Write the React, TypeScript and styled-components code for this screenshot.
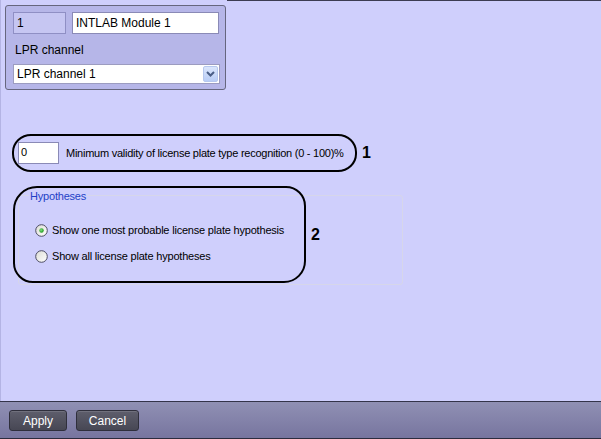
import styled, { createGlobalStyle } from "styled-components";

const GlobalStyle = createGlobalStyle`
  html, body {
    margin: 0;
    padding: 0;
  }
  body {
    font-family: "Liberation Sans", Arial, sans-serif;
    color: #000;
  }
`;

const Window = styled.div`
  width: 601px;
  height: 439px;
  display: flex;
  flex-direction: column;
  overflow: hidden;
`;

const Content = styled.div`
  flex: 1;
  display: flex;
  flex-direction: column;
  align-items: flex-start;
  padding: 5px 0 0 4px;
  border-left: 1px solid #b4b4e4;
  background:
    linear-gradient(to right, transparent 226px, #3c3c52 226px) top / 100% 1px no-repeat,
    #cfcffc;
`;

const ObjectPanel = styled.div`
  width: 221px;
  height: 85px;
  box-sizing: border-box;
  border: 1px solid #66667e;
  border-radius: 3px;
  background: #b6b6e8;
  padding: 6px 0 0 7px;
  display: flex;
  flex-direction: column;
`;

const PanelRow = styled.div`
  display: flex;
  gap: 6px;
`;

const Field = styled.div<{ $width: number; $muted?: boolean }>`
  width: ${(p) => p.$width}px;
  height: 22px;
  box-sizing: border-box;
  border: 1px solid ${(p) => (p.$muted ? "#8f8fc4" : "#8a8ab6")};
  background: ${(p) => (p.$muted ? "#c6c6f2" : "#ffffff")};
  font-size: 12px;
  line-height: 20px;
  padding-left: 3px;
  white-space: nowrap;
`;

const PanelLabel = styled.div`
  font-size: 12px;
  line-height: 14px;
  margin: 9px 0 0 2px;
`;

const Select = styled.div`
  margin-top: 7px;
  width: 207px;
  height: 20px;
  box-sizing: border-box;
  border: 1px solid #9c9cc0;
  background: #fff;
  display: flex;
  align-items: center;
  justify-content: space-between;
  padding: 0 1px 0 3px;
  font-size: 12px;
`;

const DropButton = styled.div`
  width: 15px;
  height: 16px;
  box-sizing: border-box;
  border: 1px solid #b6c8ee;
  border-radius: 2px;
  background: linear-gradient(#dbe6fc, #b9cdf6);
  display: flex;
  align-items: center;
  justify-content: center;
`;

const CalloutRow = styled.div`
  margin: 44px 0 0 7px;
  display: flex;
  align-items: center;
  gap: 5px;
`;

const Ellipse = styled.div`
  width: 345px;
  height: 38px;
  box-sizing: border-box;
  border: 2.5px solid #000;
  border-radius: 19px / 18px;
  display: flex;
  align-items: center;
  gap: 7px;
  padding-left: 4px;
`;

const NumberInput = styled.div`
  width: 41px;
  height: 22px;
  box-sizing: border-box;
  border: 1px solid #8a8ab6;
  background: #fff;
  font-size: 11px;
  line-height: 18px;
  padding-left: 2px;
`;

const SmallText = styled.span`
  font-size: 11px;
  letter-spacing: -0.25px;
  white-space: nowrap;
`;

const Marker = styled.span`
  font-size: 16px;
  font-weight: bold;
  line-height: 16px;
`;

const GroupBox = styled.div`
  position: relative;
  margin: 23px 0 0 13px;
  width: 385px;
  box-sizing: border-box;
  border: 1px solid #d6d6ea;
  border-radius: 3px;
  padding: 0 10px 20px;
  display: flex;
  flex-direction: column;
  align-items: flex-start;
`;

const Caption = styled.span`
  margin-top: -6px;
  padding: 0 1px;
  background: #cfcffc;
  color: #1f3fc6;
  font-size: 11px;
  letter-spacing: -0.2px;
  line-height: 13px;
`;

const Options = styled.div`
  display: flex;
  flex-direction: column;
  gap: 10px;
  padding: 19px 0 0 6px;
`;

const Option = styled.label`
  display: flex;
  align-items: center;
  gap: 4px;
  height: 16px;
  font-size: 11px;
  letter-spacing: -0.2px;
  white-space: nowrap;
`;

const Annotation = styled.div`
  position: absolute;
  left: -6px;
  top: -10px;
  display: flex;
  align-items: center;
  gap: 5px;
  pointer-events: none;
`;

const Loop = styled.div`
  width: 293px;
  height: 97px;
  box-sizing: border-box;
  border: 2.5px solid #000;
  border-radius: 24px 20px 22px 20px;
`;

const ActionBar = styled.div`
  height: 38px;
  box-sizing: border-box;
  border-top: 1px solid #34344a;
  border-bottom: 1px solid #2c2c3e;
  background: linear-gradient(#9090b4, #77759f);
  display: flex;
  align-items: flex-start;
  gap: 9px;
  padding: 8px 0 0 9px;
`;

const Button = styled.button<{ $width: number }>`
  width: ${(p) => p.$width}px;
  height: 21px;
  border: 1px solid #2f2f3c;
  border-radius: 3px;
  background: linear-gradient(#5e5e6c, #474754);
  color: #fff;
  font-family: "Liberation Sans", Arial, sans-serif;
  font-size: 12px;
  padding: 0;
  box-shadow: inset 0 1px 0 rgba(255, 255, 255, 0.12);
`;

const Chevron = () => (
  <svg width="9" height="6" viewBox="0 0 9 6">
    <path d="M1 1 L4.5 4.5 L8 1" fill="none" stroke="#4a5e86" strokeWidth="2" />
  </svg>
);

const Radio = ({ checked }: { checked?: boolean }) => (
  <svg width="13" height="13" viewBox="0 0 13 13">
    <defs>
      <linearGradient id="rb" x1="0" y1="0" x2="1" y2="1">
        <stop offset="0" stopColor="#dcdcd4" />
        <stop offset="1" stopColor="#ffffff" />
      </linearGradient>
      <radialGradient id="rd" cx="0.4" cy="0.4" r="0.6">
        <stop offset="0" stopColor="#7fe07f" />
        <stop offset="1" stopColor="#1f9a1f" />
      </radialGradient>
    </defs>
    <circle cx="6.5" cy="6.5" r="5.8" fill="url(#rb)" stroke="#4c4c62" strokeWidth="1" />
    {checked && <circle cx="6.5" cy="6.5" r="2.2" fill="url(#rd)" />}
  </svg>
);

export default function App() {
  return (
    <>
      <GlobalStyle />
      <Window>
        <Content>
          <ObjectPanel>
            <PanelRow>
              <Field $width={53} $muted>
                1
              </Field>
              <Field $width={147}>INTLAB Module 1</Field>
            </PanelRow>
            <PanelLabel>LPR channel</PanelLabel>
            <Select>
              <span>LPR channel 1</span>
              <DropButton>
                <Chevron />
              </DropButton>
            </Select>
          </ObjectPanel>

          <CalloutRow>
            <Ellipse>
              <NumberInput>0</NumberInput>
              <SmallText>Minimum validity of license plate type recognition (0 - 100)%</SmallText>
            </Ellipse>
            <Marker>1</Marker>
          </CalloutRow>

          <GroupBox>
            <Caption>Hypotheses</Caption>
            <Options>
              <Option>
                <Radio checked />
                Show one most probable license plate hypothesis
              </Option>
              <Option>
                <Radio />
                Show all license plate hypotheses
              </Option>
            </Options>
            <Annotation>
              <Loop />
              <Marker>2</Marker>
            </Annotation>
          </GroupBox>
        </Content>

        <ActionBar>
          <Button $width={58}>Apply</Button>
          <Button $width={63}>Cancel</Button>
        </ActionBar>
      </Window>
    </>
  );
}
